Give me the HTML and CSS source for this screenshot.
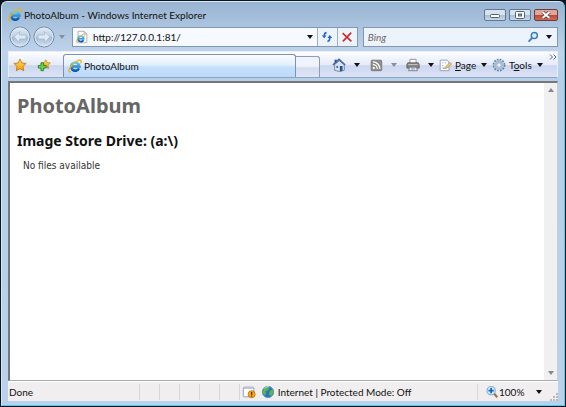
FILE: index.html
```
<!DOCTYPE html>
<html lang="en">
<head>
<meta charset="utf-8">
<title>PhotoAlbum - Windows Internet Explorer</title>
<link rel="stylesheet" href="styles.css">
</head>
<body>
<svg class="defs" aria-hidden="true">
  <defs>
    <linearGradient id="blue" x2="0" y2="1"><stop stop-color="#5fd0f8"/><stop offset="1" stop-color="#0b57b0"/></linearGradient>
    <linearGradient id="gold" x2="0" y2="1"><stop stop-color="#ffe36b"/><stop offset="1" stop-color="#f59a00"/></linearGradient>
    <linearGradient id="orb" x2="0" y2="1"><stop stop-color="#e3edf7"/><stop offset=".48" stop-color="#bccfe2"/><stop offset=".52" stop-color="#a3bbd3"/><stop offset="1" stop-color="#d5e6f5"/></linearGradient>
    <symbol id="ie" viewBox="0 0 16 16">
      <path d="M12.600 10.600A4.700 4.700 0 1 1 13 8.400H4.200" fill="none" stroke="url(#blue)" stroke-width="3"/>
      <path d="M3.200 14.600C.2 15.600.3 12 3.400 8.300 6.800 4 12.700.2 14.600 1.600c1 .8.400 2.400-.3 3.500" fill="none" stroke="#f3ae16" stroke-width="1.500"/>
    </symbol>
    <symbol id="star" viewBox="0 0 16 16">
      <path d="M8 1.200l2.100 4.500 4.900.6-3.600 3.400.9 4.900L8 12.200l-4.300 2.400.9-4.900L1 6.300l4.900-.6z" fill="url(#gold)" stroke="#c47a12" stroke-linejoin="round"/>
    </symbol>
  </defs>
</svg>
<div class="window">
  <header class="titlebar">
    <svg class="icon" viewBox="0 0 16 16"><use href="#ie"/></svg>
    <span class="caption">PhotoAlbum - Windows Internet Explorer</span>
    <div class="controls">
      <button type="button" aria-label="Minimize"><svg viewBox="0 0 12 8"><rect x="1.500" y="3.500" width="9" height="3" rx="1" fill="#fff" stroke="#53606e"/></svg></button>
      <button type="button" aria-label="Maximize"><svg viewBox="0 0 12 8"><rect x="1.500" y=".5" width="9" height="7" rx="1" fill="#fff" stroke="#53606e"/><rect x="4.500" y="3" width="3" height="2" fill="#9cb0c5" stroke="#53606e"/></svg></button>
      <button type="button" class="close" aria-label="Close"><svg viewBox="0 0 12 8"><path d="M2.500 1l7 6M9.500 1l-7 6" stroke="#633c3b" stroke-width="3.600"/><path d="M2.500 1l7 6M9.500 1l-7 6" stroke="#fff" stroke-width="2"/></svg></button>
    </div>
  </header>

  <nav class="navbar">
    <button type="button" class="orb" aria-label="Back"><svg viewBox="0 0 22 22"><circle cx="11" cy="11" r="10" fill="url(#orb)" stroke="#7088a1"/><circle cx="11" cy="11" r="9" fill="none" stroke="#dce8f4"/><path d="M10.500 5.500L5 11l5.500 5.500V13H17V9h-6.500z" fill="#dfe9f3" stroke="#a6bacf" stroke-width=".8"/></svg></button>
    <button type="button" class="orb" aria-label="Forward"><svg viewBox="0 0 22 22"><circle cx="11" cy="11" r="10" fill="url(#orb)" stroke="#7088a1"/><circle cx="11" cy="11" r="9" fill="none" stroke="#dce8f4"/><path d="M11.500 5.500L17 11l-5.500 5.500V13H5V9h6.500z" fill="#dfe9f3" stroke="#a6bacf" stroke-width=".8"/></svg></button>
    <button type="button" class="recent" aria-label="Recent pages"><i class="caret dim"></i></button>
    <div class="address">
      <div class="field">
        <svg class="icon" viewBox="0 0 16 16"><path d="M3.500 1.500h7l3 3v10h-10z" fill="#fff" stroke="#a6acb5"/><path d="M10.500 1.500v3h3" fill="none" stroke="#a6acb5"/><use href="#ie" x="1" y="4" width="11" height="11"/></svg>
        <input type="text" aria-label="Address" value="http://127.0.0.1:81/">
        <button type="button" aria-label="Show addresses"><i class="caret"></i></button>
      </div>
      <button type="button" class="cell" aria-label="Refresh"><svg class="icon" viewBox="0 0 16 16"><path d="M7.500 3C5 3.200 4.800 5 4.800 7" fill="none" stroke="#2568c4" stroke-width="1.800"/><path d="M2 6.300h5.600L4.800 9.500zM8.400 9h5.600L11.200 5.800z" fill="#2568c4"/><path d="M11.200 8.500c0 2.500-.2 4.300-2.700 4.500" fill="none" stroke="#2568c4" stroke-width="1.800"/></svg></button>
      <button type="button" class="cell" aria-label="Stop"><svg class="icon" viewBox="0 0 16 16"><path d="M3 3.500l10 9.500M12.800 3L3.300 13" stroke="#c92d2d" stroke-width="1.900"/></svg></button>
    </div>
    <div class="search">
      <input type="text" aria-label="Search" placeholder="Bing">
      <button type="button" aria-label="Go"><svg class="icon" viewBox="0 0 16 16"><circle cx="9.500" cy="6.300" r="3.500" fill="#d9ecfb" stroke="#3879bd" stroke-width="1.600"/><path d="M7 9l-4 4.200" stroke="#3879bd" stroke-width="2"/></svg></button>
      <button type="button" aria-label="Search options"><i class="caret"></i></button>
    </div>
  </nav>

  <div class="tabbar">
    <div class="favorites">
      <button type="button" aria-label="Favorites Center"><svg class="icon" viewBox="0 0 16 16"><use href="#star"/></svg></button>
      <button type="button" aria-label="Add to Favorites"><svg class="icon" viewBox="0 0 16 16"><use href="#star" x="4" y="1" width="12" height="12"/><path d="M4.500 5.500h3v3h3v3h-3v3h-3v-3h-3v-3h3z" fill="#67cf4b" stroke="#27852a"/></svg></button>
    </div>
    <button type="button" class="tab"><svg class="icon" viewBox="0 0 16 16"><use href="#ie"/></svg>PhotoAlbum</button>
    <button type="button" class="newtab" aria-label="New tab"></button>
    <div class="commands">
      <button type="button" aria-label="Home"><svg class="icon" viewBox="0 0 16 16"><path d="M3 2h2.500v4H3z" fill="#263fb2"/><path d="M3 7.500L8.500 3 14 7.500V14l-5 1.500L3 14z" fill="#dce5ee" stroke="#6c7f95"/><path d="M1 8l7-6.500L15 8" fill="none" stroke="#4563ac" stroke-width="1.800"/><path d="M9 9h3v5.500L9 15z" fill="#1e509b"/><path d="M5 9h2v2.500H5z" fill="#3a70b5"/></svg><i class="caret"></i></button>
      <button type="button" aria-label="Feeds"><svg class="icon" viewBox="0 0 16 16"><rect x="2.500" y="2.500" width="12" height="12" rx="1" fill="#8d8d8d" stroke="#777"/><circle cx="5.500" cy="11.500" r="1.300" fill="#fff"/><path d="M4.500 7.500a5 5 0 0 1 5 5M4.500 4.500a8 8 0 0 1 8 8" fill="none" stroke="#fff" stroke-width="1.400"/></svg><i class="caret dim"></i></button>
      <button type="button" aria-label="Print"><svg class="icon" viewBox="0 0 16 16"><path d="M4.500 6V1.500h7V6" fill="#fff" stroke="#8b8b8b"/><path d="M2 5.500h12l1 2v4H1v-4z" fill="#858585" stroke="#606060"/><path d="M2.500 7.500h11" stroke="#d0d0d0"/><path d="M4 10.500h8l1 4H3z" fill="#eef3f8" stroke="#777"/><path d="M5.500 12.500h5" stroke="#5a86b8"/></svg><i class="caret"></i></button>
      <button type="button" class="labelled"><svg class="icon" viewBox="0 0 16 16"><path d="M2.500 2.500h8l2 2v10h-10z" fill="#fff" stroke="#8c9bab"/><path d="M5 5.500h1M8 5.500h1M5 8.500h1M5 11.500h4" stroke="#4f83bd"/><path d="M8.500 12l.8-3 4.500-4 1.700 2-4.500 4z" fill="#f3c26a" stroke="#b4885c" stroke-width=".7"/></svg><span><u>P</u>age</span><i class="caret"></i></button>
      <button type="button" class="labelled"><svg class="icon" viewBox="0 0 16 16"><circle cx="8" cy="8" r="6.300" fill="none" stroke="#5c819f" stroke-width="2" stroke-dasharray="2 1.300"/><circle cx="8" cy="8" r="4.300" fill="#e4eef7" stroke="#a2bdd3" stroke-width="2.600"/><circle cx="8" cy="8" r="2.500" fill="#edf3fa" stroke="#7897b3" stroke-width=".8"/></svg><span>T<u>o</u>ols</span><i class="caret"></i></button>
    </div>
    <button type="button" class="more" aria-label="More commands"><svg viewBox="0 0 8 6"><path d="M1 .5L3.500 3 1 5.500M4.500.5L7 3 4.500 5.500" fill="none" stroke="#4b5fa4"/></svg></button>
  </div>

  <div class="view">
    <main>
      <h1>PhotoAlbum</h1>
      <h2>Image Store Drive: (a:\)</h2>
      <p>No files available</p>
    </main>
    <div class="scrollbar" aria-hidden="true"><i class="arrow up"></i><i class="arrow"></i></div>
  </div>

  <footer class="status">
    <span class="message">Done</span>
    <i class="slot"></i><i class="slot"></i><i class="slot"></i><i class="slot"></i><i class="slot"></i>
    <span class="slot"><svg class="icon" viewBox="0 0 16 16"><rect x="1.500" y="2.500" width="12" height="11" rx="1" fill="#fff" stroke="#8295aa"/><path d="M2 3.500h11" stroke="#b8c6d5" stroke-width="2"/><circle cx="11" cy="10.500" r="4" fill="#f7a51c" stroke="#c97407"/><path d="M11 8v3M11 12v1" stroke="#4f2a00" stroke-width="1.400"/></svg></span>
    <span class="zone"><svg class="icon" viewBox="0 0 16 16"><circle cx="8" cy="8" r="6.500" fill="#2874c9" stroke="#6d93bb"/><path d="M3 4.500L7 2l2.500 1L8 6 5 7l1 2-1.500 3L2 9zM10 7l3-2.500L14.300 8l-2.500 4.500L9 11z" fill="#5db83e"/><path d="M4 4c1.500-2 3.500-2.200 5-2" fill="none" stroke="#d7f2ff"/></svg>Internet | Protected Mode: Off</span>
    <button type="button" class="zoom"><svg class="icon" viewBox="0 0 16 16"><path d="M10 9.500l4 4.500" stroke="#9b7449" stroke-width="2.400"/><circle cx="7" cy="6.500" r="4.700" fill="#d5edff" stroke="#639ac7"/><path d="M7 3.500v6M4 6.500h6" stroke="#1765ba" stroke-width="2"/></svg>100%<i class="caret"></i></button>
    <svg class="grip" viewBox="0 0 8 8"><path d="M6 0h2v2H6zM3 3h2v2H3zM6 3h2v2H6zM0 6h2v2H0zM3 6h2v2H3zM6 6h2v2H6z" fill="#b9b9b9"/></svg>
  </footer>
</div>
</body>
</html>
```
FILE: styles.css
```
* { box-sizing: border-box; }
body {
  margin: 0;
  background: #0b1720;
  color: #111;
  font: 10px/14px Lato, "Open Sans", sans-serif;
}
button, input {
  margin: 0;
  padding: 0;
  border: 0;
  background: none;
  color: inherit;
  font: inherit;
}
button { display: flex; align-items: center; justify-content: center; }
input { min-width: 0; outline: 0; }
.defs { position: absolute; width: 0; height: 0; }
.icon { width: 14px; height: 14px; flex: none; }
.caret {
  flex: none;
  border: 3px solid transparent;
  border-top: 4px solid #111;
  border-bottom: 0;
}
.caret.dim { border-top-color: #8190a0; }

.window {
  display: flex;
  flex-direction: column;
  min-height: calc(100vh - 2px);
  margin: 1px;
  padding: 0 6px 4px;
  border: 1px solid #55cbe7;
  border-top-color: #d8e8f5;
  border-left-color: #d8e8f5;
  border-radius: 6px 6px 0 0;
  background: linear-gradient(#98b4d2, #bfd4eb 50px, #b5d0ea 80px, #b9d1ea);
}

.titlebar { display: flex; align-items: center; height: 23px; gap: 2px; padding-top: 3px; }
.caption { flex: 1; }
.controls { display: flex; gap: 3px; }
.controls button {
  width: 22px;
  height: 12px;
  border: 1px solid #64788f;
  border-radius: 2px;
  background: linear-gradient(#d7e3ef 45%, #a7bdd4 50%, #c6d9eb);
}
.controls .close {
  width: 24px;
  border-color: #6d3b3b;
  background: linear-gradient(#e1a69b 45%, #bd4631 50%, #d46b52);
}
.controls svg { width: 12px; height: 8px; }

.navbar { display: flex; align-items: center; height: 24px; }
.orb { width: 24px; }
.orb svg { width: 22px; height: 22px; }
.recent { width: 16px; }
.recent .caret { margin-right: 4px; }
.address, .search {
  display: flex;
  height: 20px;
  border: 1px solid #8298b0;
  background: #edf3fb;
}
.address { flex: 3; }
.field { display: flex; flex: 1; align-items: center; gap: 4px; padding-left: 2px; background: #f6f9fd; }
.field input { flex: 1; }
.field button { width: 14px; height: 18px; }
.cell { width: 20px; border-left: 1px solid #9cafc3; }
.search { flex: 2; margin-left: 5px; padding-left: 4px; }
.search input { flex: 1; }
.search input::placeholder { color: #666; font-style: italic; opacity: 1; }
.search button { width: 16px; }

.tabbar {
  display: flex;
  align-items: flex-end;
  height: 27px;
  margin-top: 2px;
  border: 1px solid #e7effa;
  border-bottom: 1px solid #8ea3bf;
  background: linear-gradient(#fcfdff, #e5ebf8 50%, #ccd6ee 55%, #dbe3f6);
}
.favorites { display: flex; align-self: center; gap: 10px; width: 54px; padding-left: 4px; }
.tab {
  flex: 1;
  justify-content: flex-start;
  gap: 2px;
  height: 23px;
  padding-left: 4px;
  border: 1px solid #8191ac;
  border-bottom: 0;
  border-radius: 3px 3px 0 0;
  background: linear-gradient(#fbfdff, #e1effd 45%, #c5e0fb 55%, #bed8fa);
}
.newtab {
  width: 24px;
  height: 21px;
  border: 1px solid #8e9bb3;
  border-left: 0;
  border-bottom: 0;
  border-radius: 0 3px 0 0;
  background: linear-gradient(#eff3fb 45%, #d4dcef 55%, #dfe6f6);
}
.commands {
  display: grid;
  grid-template-columns: 37px 37px 32px 54px 56px;
  align-self: center;
  padding-left: 12px;
}
.commands button { gap: 8px; justify-content: flex-start; }
.commands .labelled { gap: 3px; }
.commands .labelled .caret { margin-left: 2px; }
.more { width: 9px; align-self: flex-start; padding-top: 2px; }
.more svg { width: 8px; height: 6px; }

.view {
  display: flex;
  flex: 1;
  margin-top: 3px;
  border: 1px solid #777;
  border-width: 2px 1px 1px 2px;
  border-color: #777 #ccc #aaa #777;
  background: #fff;
}
main {
  flex: 1;
  padding: 10px 7px;
  font-family: "Noto Sans", sans-serif;
}
h1, h2, p { margin: 0; }
h1 { color: #666; font-size: 20px; line-height: 26px; }
h2 { margin-top: 12px; font-size: 14px; line-height: 20px; }
p { margin: 8px 0 0 6px; color: #333; font-family: "DejaVu Sans Condensed", "Noto Sans", sans-serif; }
.scrollbar {
  display: flex;
  flex-direction: column;
  justify-content: space-between;
  align-items: center;
  width: 13px;
  padding: 5px 0;
  background: #f0f0f0;
}
.arrow { border: 3px solid transparent; border-top: 4px solid #888; border-bottom: 0; }
.arrow.up { transform: rotate(180deg); }

.status {
  display: flex;
  align-items: center;
  height: 20px;
  border-top: 1px solid #fff;
  background: #f0eeee;
}
.message { flex: 3; padding-left: 1px; }
.slot { width: 20px; height: 16px; padding: 1px 2px; border-left: 1px solid #d9d7d7; }
.zone { display: flex; flex: 5; align-items: center; gap: 3px; padding-left: 2px; }
.zoom { justify-content: flex-start; width: 73px; height: 16px; padding-left: 7px; border-left: 1px solid #d9d7d7; }
.zoom .caret { margin-left: 12px; }
.grip { width: 8px; height: 8px; align-self: flex-end; }
```
